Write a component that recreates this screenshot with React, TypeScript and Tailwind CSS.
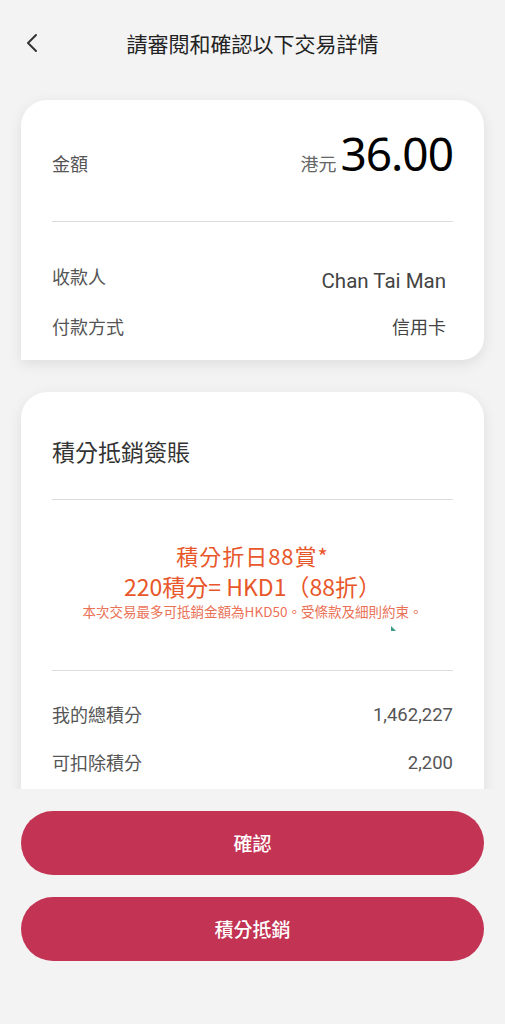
const cjk = "font-['Noto_Sans_CJK_TC','Noto_Sans',sans-serif]";
const latin = "font-['Roboto','Noto_Sans_CJK_TC',sans-serif]";

const detailRows = [
  { label: '收款人', value: 'Chan Tai Man' },
  { label: '付款方式', value: '信用卡' },
];

const pointRows = [
  { label: '我的總積分', value: '1,462,227' },
  { label: '可扣除積分', value: '2,200' },
];

export default function App() {
  return (
    <div className={`h-[1024px] w-full flex flex-col bg-[#f3f3f3] ${cjk}`}>
      <main className="h-[789px] overflow-hidden">
        {/* header */}
        <header className="relative h-[86px] flex items-center justify-center">
          <button className="absolute left-[23px] top-[33px] w-[18px] h-[20px] flex items-center justify-center">
            <svg width="14" height="20" viewBox="0 0 14 20" fill="none">
              <polyline points="11,2 3,10 11,18" stroke="#333" strokeWidth="2" strokeLinecap="round" strokeLinejoin="round" />
            </svg>
          </button>
          <h1 className="text-[21px] leading-[28px] text-[#222]">請審閱和確認以下交易詳情</h1>
        </header>

        <div className="px-[21px] mt-[14px] flex flex-col gap-[32px]">
          {/* amount card */}
          <section className="bg-white rounded-tl-[26px] rounded-tr-[26px] rounded-br-[22px] shadow-[0_4px_14px_rgba(0,0,0,0.09)] px-[31px] pt-[26px] pb-[9px]">
            <div className="h-[54px] flex items-baseline justify-between">
              <span className="text-[18px] text-[#555]">金額</span>
              <span className="flex items-baseline">
                <span className="text-[18px] text-[#666] mr-[4px]">港元</span>
                <span className="font-['Noto_Sans',sans-serif] text-[46px] leading-[54px] tracking-[-1px] text-black">36.00</span>
              </span>
            </div>
            <div className="mt-[41px] h-px bg-[#dcdcdc]" />
            <div className="mt-[29px]">
              {detailRows.map((r) => (
                <div key={r.label} className="h-[50px] flex items-center justify-between">
                  <span className="text-[18px] text-[#555]">{r.label}</span>
                  <span className={`pr-[7px] text-[#444] ${r.value === '信用卡' ? 'text-[18px]' : `${latin} text-[20.5px] translate-y-[5px]`}`}>
                    {r.value}
                  </span>
                </div>
              ))}
            </div>
          </section>

          {/* points card */}
          <section className="bg-white rounded-t-[26px] shadow-[0_4px_14px_rgba(0,0,0,0.09)] px-[31px] pt-[43px] pb-[60px]">
            <h2 className="text-[23px] leading-[32px] text-[#333]">積分抵銷簽賬</h2>
            <div className="mt-[32px] h-px bg-[#dcdcdc]" />

            <div className="relative h-[170px] pt-[40px] flex flex-col items-center text-center">
              <p className="text-[22px] leading-[31px] tracking-[1px] text-[#e8572a]">積分折日88賞*</p>
              <p className="text-[23px] leading-[31px] text-[#e8572a]">220積分= HKD1（88折）</p>
              <p className="text-[13.5px] leading-[18px] text-[#ea7156]">本次交易最多可抵銷金額為HKD50。受條款及細則約束。</p>
              <span className="absolute left-[339px] top-[126px] w-0 h-0 border-l-[5px] border-l-[#3a9a88] border-t-[5px] border-t-transparent" />
            </div>

            <div className="h-px bg-[#dcdcdc]" />
            <div className="mt-[19px]">
              {pointRows.map((r) => (
                <div key={r.label} className="h-[48px] flex items-center justify-between">
                  <span className="text-[18px] text-[#555]">{r.label}</span>
                  <span className={`${latin} text-[18.5px] text-[#555] translate-y-[2px]`}>{r.value}</span>
                </div>
              ))}
            </div>
          </section>
        </div>
      </main>

      {/* footer actions */}
      <footer className="flex-1 px-[21px] pt-[22px] flex flex-col gap-[22px] bg-[#f3f3f3]">
        <button className="h-[64px] rounded-full bg-[#c33454] text-white text-[19px] font-medium">確認</button>
        <button className="h-[64px] rounded-full bg-[#c33454] text-white text-[19px] font-medium">積分抵銷</button>
      </footer>
    </div>
  );
}
